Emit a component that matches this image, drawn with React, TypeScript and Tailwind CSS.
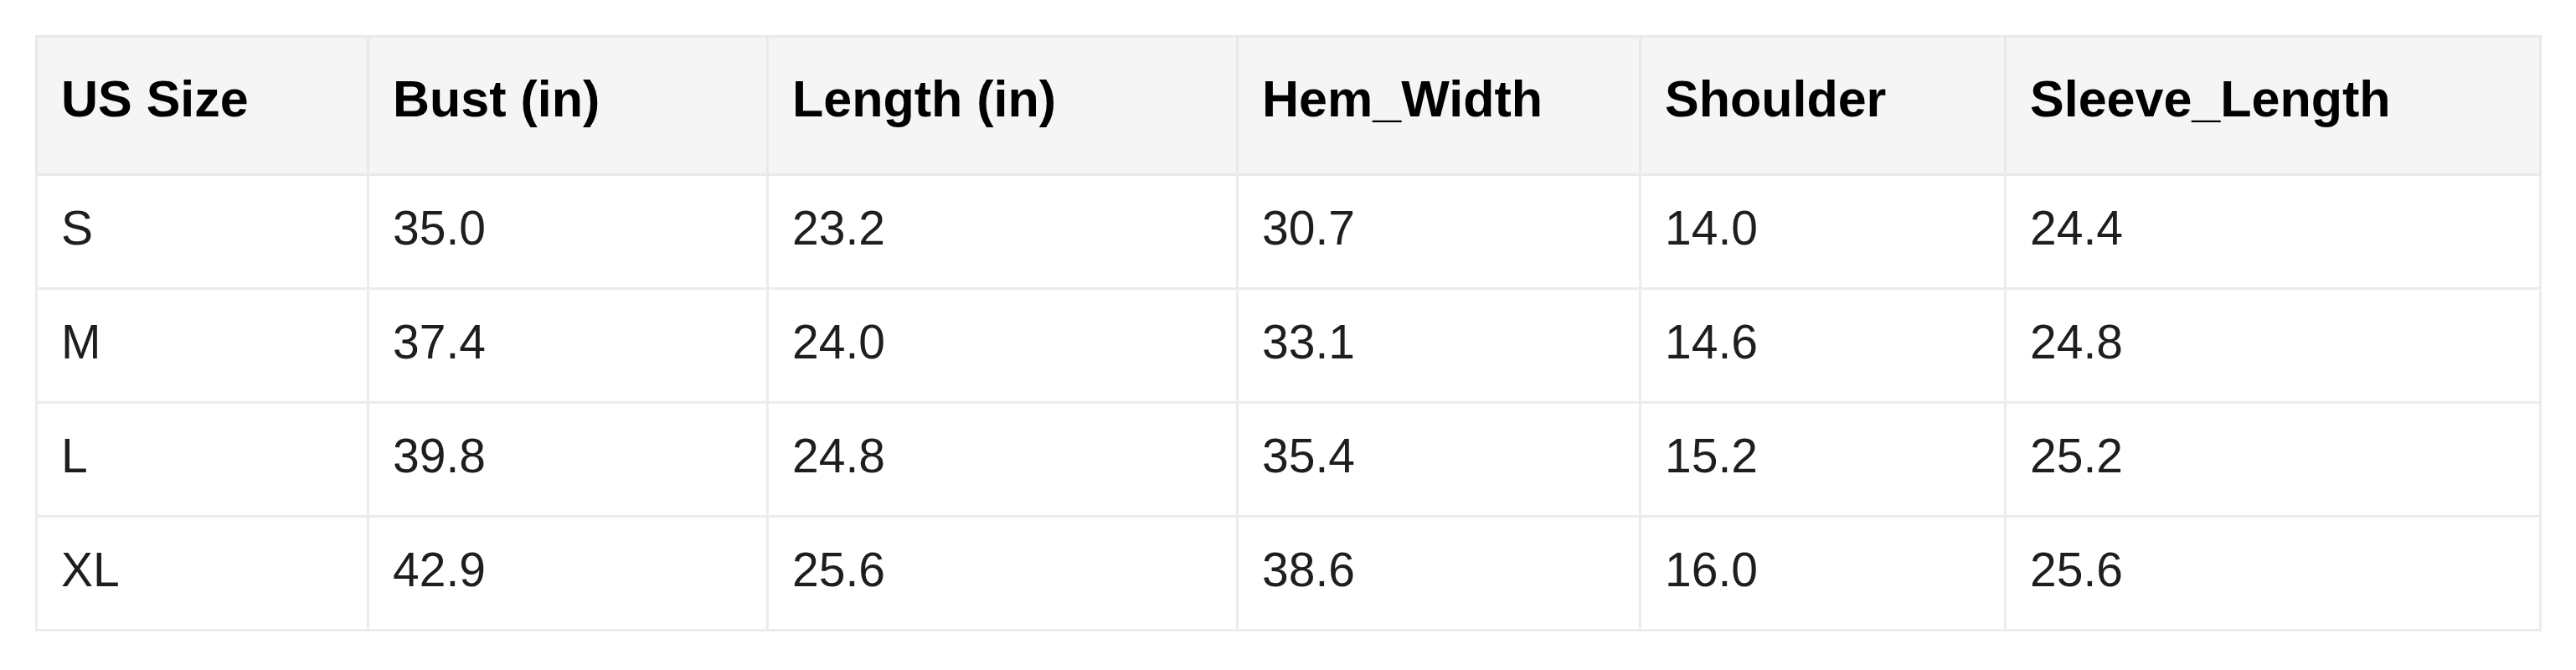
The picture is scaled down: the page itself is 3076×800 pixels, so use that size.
const headers = [
  { label: "US Size", w: "w-[396px]" },
  { label: "Bust (in)", w: "w-[477px]" },
  { label: "Length (in)", w: "w-[561px]" },
  { label: "Hem_Width", w: "w-[481px]" },
  { label: "Shoulder", w: "w-[436px]" },
  { label: "Sleeve_Length", w: "w-[639px]" },
];

const rows = [
  ["S", "35.0", "23.2", "30.7", "14.0", "24.4"],
  ["M", "37.4", "24.0", "33.1", "14.6", "24.8"],
  ["L", "39.8", "24.8", "35.4", "15.2", "25.2"],
  ["XL", "42.9", "25.6", "38.6", "16.0", "25.6"],
];

export default function App() {
  return (
    <div className="bg-white w-[3076px] h-[800px] pt-[42px] pl-[42px] font-['Liberation_Sans',Arial,sans-serif]">
      <table className="table-fixed border-collapse w-[2990px]">
        <thead>
          <tr className="bg-[#f5f5f5] h-[165px]">
            {headers.map((h) => (
              <th
                key={h.label}
                className={`${h.w} border-[3px] border-[#e9e9e9] text-left align-middle pl-[28px] pb-[14px] text-[61px] font-bold text-black`}
              >
                {h.label}
              </th>
            ))}
          </tr>
        </thead>
        <tbody>
          {rows.map((r) => (
            <tr key={r[0]} className="h-[136px]">
              {r.map((c, i) => (
                <td
                  key={i}
                  className="border-[3px] border-[#ececec] text-left align-middle pl-[28px] pb-[8px] text-[57px] text-[#1e1e1e]"
                >
                  {c}
                </td>
              ))}
            </tr>
          ))}
        </tbody>
      </table>
    </div>
  );
}
